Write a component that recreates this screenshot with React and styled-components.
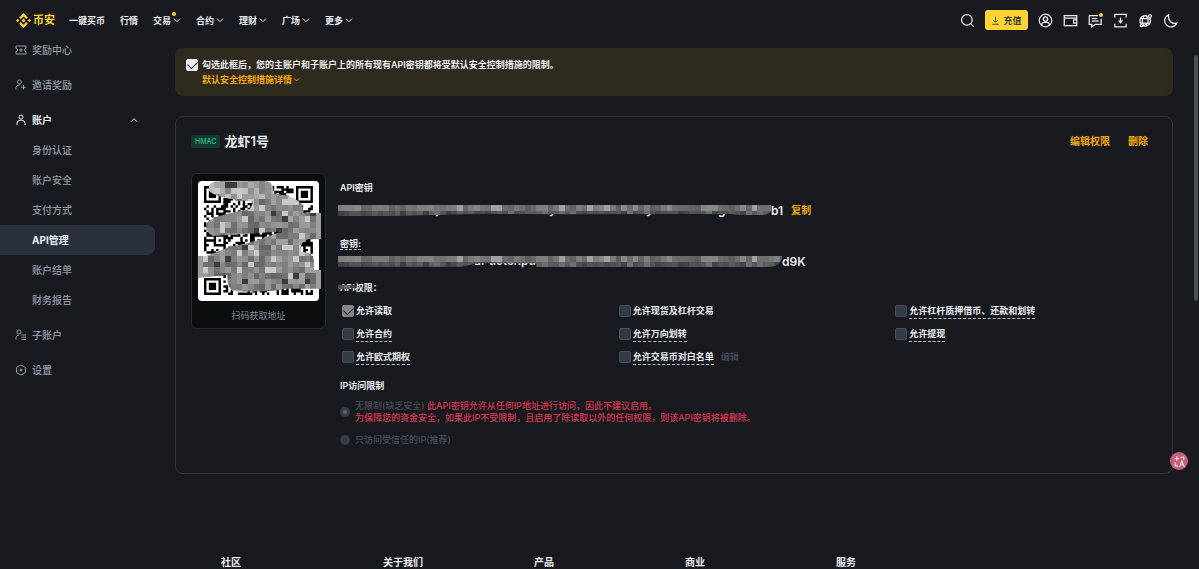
import React from "react";
import styled, { createGlobalStyle, css } from "styled-components";

const GlobalStyle = createGlobalStyle`
  * { box-sizing: border-box; }
  html { scrollbar-width: none; background: #181a20; }
  body {
    margin: 0;
    background: #181a20;
    color: #eaecef;
    font-family: Inter, "Noto Sans CJK SC", sans-serif;
    font-size: 9px;
    line-height: 15px;
  }
  button, input { font: inherit; color: inherit; margin: 0; }
  button { padding: 0; border: 0; background: none; cursor: pointer; }
  a { color: inherit; text-decoration: none; }
  svg { display: block; flex: none; }
  h1, h2, h3, p, ul { margin: 0; padding: 0; font-size: inherit; }
  li { list-style: none; }
`;

/* ---------- header ---------- */

const Header = styled.header`
  display: flex;
  align-items: center;
  justify-content: space-between;
  height: 35px;
  padding: 5px 21px 0 16px;
`;

const HeaderSide = styled.div`
  display: flex;
  align-items: center;
  gap: ${(p) => p.$gap}px;
`;

const Logo = styled.a`
  display: flex;
  align-items: center;
  gap: 2px;
  color: #fcd535;
  font-size: 11px;
  font-weight: 700;
`;

const Nav = styled.nav`
  display: flex;
  gap: 15px;
  font-weight: 600;
`;

const NavLink = styled.a`
  position: relative;
  display: flex;
  align-items: center;
  gap: 2px;
  white-space: nowrap;
`;

const Dot = styled.span`
  position: absolute;
  top: ${(p) => p.$top}px;
  right: ${(p) => p.$right}px;
  width: 4px;
  height: 4px;
  border-radius: 50%;
  background: #fcd535;
`;

const IconButton = styled.button`
  position: relative;
  width: 15px;
  height: 15px;
`;

const Deposit = styled.button`
  display: flex;
  align-items: center;
  justify-content: center;
  gap: 3px;
  width: 43px;
  height: 20px;
  border-radius: 3px;
  background: #fcd535;
  color: #202630;
  font-weight: 500;
`;

/* ---------- sidebar ---------- */

const Body = styled.div`
  display: flex;
  align-items: flex-start;
  gap: 20px;
  padding-right: 26px;
`;

const Sidebar = styled.nav`
  display: flex;
  flex-direction: column;
  gap: 5px;
  flex: 0 0 155px;
  font-size: 10px;
  color: #929aa5;
`;

const SideLink = styled.a`
  display: flex;
  align-items: center;
  gap: 5px;
  height: 30px;
  padding-left: 15px;
  font-weight: 500;
  ${(p) => p.$open && css`color: #eaecef; font-weight: 700;`}
  > svg:last-child:not(:first-child) { margin: 0 17px 0 auto; }
`;

const SubLink = styled.a`
  display: flex;
  align-items: center;
  height: 30px;
  padding-left: 32px;
  font-weight: 500;
  border-radius: 0 8px 8px 0;
  ${(p) => p.$active && css`background: #29313d; color: #eaecef; font-weight: 700;`}
`;

/* ---------- main ---------- */

const Main = styled.main`
  flex: 1;
  min-width: 0;
  padding-top: 13px;
`;

const Banner = styled.section`
  display: grid;
  grid-template-columns: 12px 1fr;
  column-gap: 4px;
  align-items: center;
  padding: 9px 11px;
  border-radius: 8px;
  background: #2f2a1e;
  font-weight: 600;
`;

const DetailLink = styled.a`
  display: flex;
  align-items: center;
  grid-column: 2;
  gap: 1px;
  color: #f0a90b;
`;

const Check = styled.input`
  appearance: none;
  flex: none;
  width: 12px;
  height: 12px;
  border-radius: 2px;
  border: 1px solid #474d57;
  background: #333b47;
  &:checked {
    border-color: ${(p) => (p.disabled ? "#85878c" : "#eaecef")};
    background: ${(p) => (p.disabled ? "#85878c" : "#eaecef")};
  }
  &:checked::after {
    content: "";
    display: block;
    width: 8px;
    height: 5px;
    margin: 1px;
    border: solid #181a20;
    border-width: 0 0 1px 1px;
    transform: rotate(-45deg);
  }
`;

const Card = styled.section`
  margin-top: 20px;
  padding: 14px 0 27px 15px;
  border: 1px solid #2f343d;
  border-radius: 8px;
`;

const CardHead = styled.div`
  display: flex;
  align-items: center;
  height: 20px;
  padding-right: 24px;
`;

const Badge = styled.span`
  padding: 0 4px;
  border-radius: 2px;
  background: #123a30;
  color: #2ebd85;
  font-size: 7px;
  line-height: 13px;
  font-weight: 500;
`;

const Title = styled.h1`
  flex: 1;
  margin-left: 4px;
  font-size: 13px;
  line-height: 20px;
  font-weight: 600;
`;

const TextButton = styled.button`
  margin-left: ${(p) => p.$space}px;
  color: ${(p) => (p.$muted ? "#474d57" : "#f0a90b")};
  font-size: ${(p) => (p.$muted ? 9 : 10)}px;
  font-weight: ${(p) => (p.$muted ? 500 : 600)};
`;

const CardBody = styled.div`
  display: flex;
  align-items: flex-start;
  gap: 14px;
  margin-top: 22px;
`;

const QrBox = styled.figure`
  flex: none;
  width: 135px;
  margin: 0;
  padding-bottom: 5px;
  border: 1px solid #262b32;
  border-radius: 6px;
  background: #0b0e11;
  color: #848e9c;
  text-align: center;
`;

const Details = styled.div`
  flex: 1;
  min-width: 0;
  padding-top: 7px;
`;

const Label = styled.h2`
  position: relative;
  margin-top: ${(p) => p.$space || 0}px;
  font-weight: 600;
`;

const Dashed = styled.span`
  border-bottom: 1px dashed #b7bdc6;
`;

const KeyRow = styled.div`
  display: flex;
  align-items: center;
  height: 18px;
  margin: ${(p) => p.$space}px 0 0 -2px;
  font-size: 12px;
  font-weight: 600;
`;

const LabelCover = styled.svg`
  position: absolute;
  top: 3px;
  left: -2px;
`;

const Permissions = styled.ul`
  display: grid;
  grid-template-columns: repeat(3, 1fr);
  grid-auto-rows: 23px;
  align-items: center;
  margin-top: 4px;
  padding-left: 2px;
  font-weight: 600;
`;

const Permission = styled.li`
  display: flex;
  align-items: center;
`;

const CheckLabel = styled.label`
  display: flex;
  align-items: center;
  gap: 2px;
`;

const RadioLabel = styled.label`
  display: flex;
  align-items: center;
  gap: 5px;
  margin-top: ${(p) => p.$space}px;
  color: #474d57;
  line-height: 12px;
  font-weight: 500;
`;

const Radio = styled.input`
  appearance: none;
  flex: none;
  width: 10px;
  height: 10px;
  border-radius: 50%;
  background: #333b47;
  &:checked { background: radial-gradient(circle, #5e6673 1px, #333b47 3px); }
`;

const Warning = styled.span`
  color: #d9394f;
`;

/* ---------- footer and floating parts ---------- */

const Footer = styled.footer`
  display: grid;
  grid-template-columns: 162fr 151fr 151fr 151fr 151fr;
  padding: 81px 212px 8px 221px;
  font-size: 10px;
  font-weight: 700;
`;

const ScrollThumb = styled.div`
  position: fixed;
  top: 55px;
  right: 1px;
  width: 4px;
  height: 246px;
  border-radius: 2px;
  background: #474f5b;
`;

const TranslateButton = styled.button`
  position: fixed;
  right: 11px;
  bottom: 99px;
  display: grid;
  place-items: center;
  width: 18px;
  height: 18px;
  border-radius: 50%;
  background: #c4607a;
  color: #f3dfe5;
`;

/* ---------- drawings ---------- */

const Icon = ({ size = 15, width = 2, children }) => (
  <svg width={size} height={size} viewBox="0 0 24 24" fill="none" stroke="currentColor" strokeWidth={width} aria-hidden="true">
    {children}
  </svg>
);

const Chevron = ({ up, size = 8 }) => (
  <Icon size={size} width={3}>
    <path d={up ? "M3 17l9-9 9 9" : "M3 8l9 9 9-9"} />
  </Icon>
);

const BrandMark = () => (
  <svg width="15" height="15" viewBox="0 0 24 24" fill="currentColor" aria-hidden="true">
    <path d="M12 0l7 7-2.7 2.7L12 5.4 7.7 9.7 5 7zM2.7 9.3L5.4 12l-2.7 2.7L0 12zM21.3 9.3L24 12l-2.7 2.7-2.7-2.7zM12 24l-7-7 2.7-2.7 4.3 4.3 4.3-4.3L19 17zM12 8.8l3.2 3.2-3.2 3.2L8.8 12z" />
  </svg>
);

const toolIcons = {
  search: <><circle cx="11" cy="11" r="8.5" /><path d="M17 17l5 5" /></>,
  user: <><circle cx="12" cy="12" r="10" /><circle cx="12" cy="9.5" r="3.5" /><path d="M6 19v-1q1-3 4-3h4q3 0 4 3v1" /></>,
  wallet: <><path d="M2 4h20v16H2zM2 8h20M22 11h-5v5h5" /></>,
  message: <><path d="M16 4H2v14h4v4l6-4h9V9M6 9h9M6 13h11" /></>,
  download: <><path d="M3 7V2h18v5M3 17v5h18v-5M12 7v8" /><path d="M8 12h8l-4 5z" fill="currentColor" stroke="none" /></>,
  globe: <><circle cx="11.500" cy="12.500" r="8.500" /><path d="M4 9h13M4 16h14M10 4.500c-4 5-4 11 0 16M13 4.500c4 5 4 11 0 16M16 4c8-4 6 3 2 7M5 18c-5 6 4 4 9-1" /></>,
  moon: <path d="M9 3A10 10 0 1 0 22 16Q16 18 12 14T9 3z" />,
};

const sideIcons = {
  reward: <><path d="M2 4h20v5q-3 0-3 3t3 3v5H2v-5q3 0 3-3T2 9z" /><path d="M12 9l1 2 2 1-2 1-1 2-1-2-2-1 2-1z" /></>,
  invite: <><circle cx="9" cy="6" r="4" /><path d="M2 21v-4q1-5 6-5h2M17 12v9M12.500 16.500h9" /></>,
  account: <><circle cx="12" cy="6" r="4" /><path d="M4 22v-4q1-6 8-6t8 6v4" /></>,
  sub: <><circle cx="8" cy="6" r="4" /><path d="M2 21v-4q1-5 6-5M13 12h9M13 16.500h9M13 21h9" /></>,
  settings: <><path d="M12 2l9 5v10l-9 5-9-5V7z" /><circle cx="12" cy="12" r="2" fill="currentColor" /></>,
};

function makeRandom(seed) {
  let s = seed;
  return () => {
    s = (s * 1103515245 + 12345) % 2147483648;
    return s / 2147483648;
  };
}

const gray = (v) => `rgb(${v},${v},${v})`;

const QR_SIZE = 45;

function ring(x, y, cx, cy, radius) {
  const d = Math.max(Math.abs(x - cx), Math.abs(y - cy));
  if (d > radius + 1) return null;
  if (radius === 3) return d === 3 || d <= 1;
  return d <= radius ? d !== 1 : null;
}

function qrPath() {
  const random = makeRandom(77);
  const last = QR_SIZE - 4;
  const finders = [[3, 3], [last, 3], [3, last]];
  const marks = [[6, 22], [22, 6], [22, 22], [38, 22], [22, 38], [38, 38]];
  let d = "";
  for (let y = 0; y < QR_SIZE; y += 1) {
    for (let x = 0; x < QR_SIZE; x += 1) {
      let on = random() > 0.5;
      marks.forEach(([cx, cy]) => {
        const r = ring(x, y, cx, cy, 2);
        if (r !== null) on = r;
      });
      finders.forEach(([cx, cy]) => {
        const r = ring(x, y, cx, cy, 3);
        if (r !== null) on = r;
      });
      if (on) d += `M${x} ${y}h1v1h-1z`;
    }
  }
  return d;
}

const QR_PATH = qrPath();

function mosaicCells(x0, y0, cols, rows, tone) {
  const random = makeRandom(19);
  const cells = [];
  for (let r = 0; r < rows; r += 1) {
    for (let c = 0; c < cols; c += 1) {
      cells.push({ x: x0 + c * 17, y: y0 + r * 17, fill: gray(Math.round(tone(random(), c, r, random()))) });
    }
  }
  return cells;
}

const Cells = ({ cells }) => cells.map((c) => (
  <rect key={`${c.x}-${c.y}`} x={c.x} y={c.y} width="17" height="17" fill={c.fill} />
));

const qrCells = mosaicCells(81, 200, 22, 21, (a, c, r, b) => {
  if (c > 20 || c < 1) return 158;
  if (b > 0.96) return 60;
  if (b > 0.84) return 200;
  return (r < 4 ? 130 : 100) + a * 65;
});

const QrCode = () => (
  <svg width="133" height="134" viewBox="0 0 133 134" role="img" aria-label="QR">
    <rect x="6" y="7" width="121" height="120" rx="4" fill="#fff" />
    <g transform="translate(12 12) scale(2.42)">
      <path d={QR_PATH} fill="#000" />
    </g>
    <g transform="translate(-22 -64) scale(0.33333)">
      <clipPath id="smear">
        <path d="M143 212H285Q310 215 310 240V250Q400 262 400 300V309H453V387H415Q385 400 395 425Q432 430 432 455V480H453V536H345Q330 545 190 545Q170 530 172 495L83 504V438H110L180 410Q250 400 330 365L130 378Q108 370 108 345Q110 320 240 297L250 275Q130 265 115 240Q115 215 143 212Z" />
      </clipPath>
      <g clipPath="url(#smear)" shapeRendering="crispEdges"><Cells cells={qrCells} /></g>
    </g>
  </svg>
);

const keyCells = mosaicCells(0, 0, 80, 2, (a, c, r, b) => {
  if (r === 0) return b > 0.88 ? 160 : 92 + a * 45;
  return b > 0.9 ? 110 : 62 + a * 34;
});

const KeyMosaic = ({ width, id, edge, peeks }) => (
  <svg width={width} height="18" viewBox={`0 0 ${width} 18`} aria-hidden="true">
    {peeks.map(([x, text]) => (
      <text key={x} x={x} y="13" fill="#eaecef" fontSize="12" fontWeight="600">{text}</text>
    ))}
    <rect x="0" y="0" width={width} height="4" fill="#181a20" />
    <g transform="translate(0 4) scale(0.33333)">
      <clipPath id={id}><path d={edge} /></clipPath>
      <g clipPath={`url(#${id})`} shapeRendering="crispEdges"><Cells cells={keyCells} /></g>
    </g>
  </svg>
);

/* ---------- content ---------- */

const navItems = [
  { text: "一键买币" },
  { text: "行情" },
  { text: "交易", menu: true, dot: true },
  { text: "合约", menu: true },
  { text: "理财", menu: true },
  { text: "广场", menu: true },
  { text: "更多", menu: true },
];

const accountItems = ["身份认证", "账户安全", "支付方式", "API管理", "账户结单", "财务报告"];

const permissions = [
  { text: "允许读取", checked: true, plain: true },
  { text: "允许现货及杠杆交易", plain: true },
  { text: "允许杠杆质押借币、还款和划转" },
  { text: "允许合约" },
  { text: "允许万向划转" },
  { text: "允许提现" },
  { text: "允许欧式期权" },
  { text: "允许交易币对白名单", edit: true },
];

const Tool = ({ name, label, dot }) => (
  <IconButton aria-label={label}>
    <Icon>{toolIcons[name]}</Icon>
    {dot && <Dot $top={0} $right={0} />}
  </IconButton>
);

const SideItem = ({ icon, text, open }) => (
  <SideLink href="#" $open={open}>
    <Icon size={12}>{sideIcons[icon]}</Icon>
    {text}
    {open && <Chevron up />}
  </SideLink>
);

export default function App() {
  return (
    <>
      <GlobalStyle />
      <Header>
        <HeaderSide $gap={14}>
          <Logo href="#"><BrandMark />币安</Logo>
          <Nav>
            {navItems.map((item) => (
              <NavLink href="#" key={item.text}>
                {item.text}
                {item.menu && <Chevron />}
                {item.dot && <Dot $top={-1} $right={5} />}
              </NavLink>
            ))}
          </Nav>
        </HeaderSide>
        <HeaderSide $gap={10}>
          <Tool name="search" label="搜索" />
          <Deposit>
            <Icon size={9}><path d="M12 2v14M6 11l6 6 6-6M3 22h18" /></Icon>
            充值
          </Deposit>
          <Tool name="user" label="用户" />
          <Tool name="wallet" label="钱包" />
          <Tool name="message" label="消息" dot />
          <Tool name="download" label="下载" />
          <Tool name="globe" label="语言" />
          <Tool name="moon" label="主题" />
        </HeaderSide>
      </Header>

      <Body>
        <Sidebar>
          <SideItem icon="reward" text="奖励中心" />
          <SideItem icon="invite" text="邀请奖励" />
          <div>
            <SideItem icon="account" text="账户" open />
            {accountItems.map((text) => (
              <SubLink href="#" key={text} $active={text === "API管理"}>{text}</SubLink>
            ))}
          </div>
          <SideItem icon="sub" text="子账户" />
          <SideItem icon="settings" text="设置" />
        </Sidebar>

        <Main>
          <Banner>
            <Check type="checkbox" id="default-control" defaultChecked />
            <label htmlFor="default-control">
              勾选此框后，您的主账户和子账户上的所有现有API密钥都将受默认安全控制措施的限制。
            </label>
            <DetailLink href="#">默认安全控制措施详情<Chevron size={7} /></DetailLink>
          </Banner>

          <Card>
            <CardHead>
              <Badge>HMAC</Badge>
              <Title>龙虾1号</Title>
              <TextButton $space={0}>编辑权限</TextButton>
              <TextButton $space={18}>删除</TextButton>
            </CardHead>
            <CardBody>
              <QrBox>
                <QrCode />
                <figcaption>扫码获取地址</figcaption>
              </QrBox>
              <Details>
                <Label>API密钥</Label>
                <KeyRow $space={6}>
                  <KeyMosaic
                    width={433}
                    id="key-edge"
                    edge="M0 0H1299V18Q1290 30 1270 30H1200L1180 27H960L700 28L420 27L160 33H0Z"
                    peeks={[[98, "j"], [211, "y"], [308, "y"], [380, "g"]]}
                  />
                  b1
                  <TextButton $space={8}>复制</TextButton>
                </KeyRow>
                <Label $space={17}><Dashed>密钥:</Dashed></Label>
                <KeyRow $space={1}>
                  <KeyMosaic
                    width={444}
                    id="secret-edge"
                    edge="M0 0H1332Q1330 33 1290 33H595V22H420L370 32H0Z"
                    peeks={[[136, "ar uctshpu"]]}
                  />
                  d9K
                </KeyRow>
                <Label $space={10}>
                  API权限：
                  <LabelCover width="20" height="6" viewBox="0 0 20 6" aria-hidden="true">
                    <path d="M0 2h6v4H0z" fill="#505257" />
                    <path d="M6 2h6v4H6z" fill="#6c6e73" />
                    <path d="M12 2h5l2-2v5h-7z" fill="#44464c" />
                  </LabelCover>
                </Label>
                <Permissions>
                  {permissions.map((p) => (
                    <Permission key={p.text}>
                      <CheckLabel>
                        <Check type="checkbox" disabled defaultChecked={p.checked} />
                        {p.plain ? <span>{p.text}</span> : <Dashed>{p.text}</Dashed>}
                      </CheckLabel>
                      {p.edit && <TextButton $space={7} $muted>编辑</TextButton>}
                    </Permission>
                  ))}
                </Permissions>
                <Label $space={10}>IP访问限制</Label>
                <RadioLabel $space={7}>
                  <Radio type="radio" name="ip" disabled defaultChecked />
                  <span>
                    无限制(缺乏安全) <Warning>
                      此API密钥允许从任何IP地址进行访问，因此不建议启用。<br />
                      为保障您的资金安全，如果此IP不受限制，且启用了除读取以外的任何权限，则该API密钥将被删除。
                    </Warning>
                  </span>
                </RadioLabel>
                <RadioLabel $space={10}>
                  <Radio type="radio" name="ip" disabled />
                  只访问受信任的IP(推荐)
                </RadioLabel>
              </Details>
            </CardBody>
          </Card>
        </Main>
      </Body>

      <Footer>
        {["社区", "关于我们", "产品", "商业", "服务"].map((text) => <h3 key={text}>{text}</h3>)}
      </Footer>

      <ScrollThumb />
      <TranslateButton aria-label="翻译">
        <Icon size={13}>
          <path d="M7 2v9M2.500 6.500h9M14 4h6v5M4 14v6h5M12 22l4.500-11L21 22M14 18h5" />
        </Icon>
      </TranslateButton>
    </>
  );
}
